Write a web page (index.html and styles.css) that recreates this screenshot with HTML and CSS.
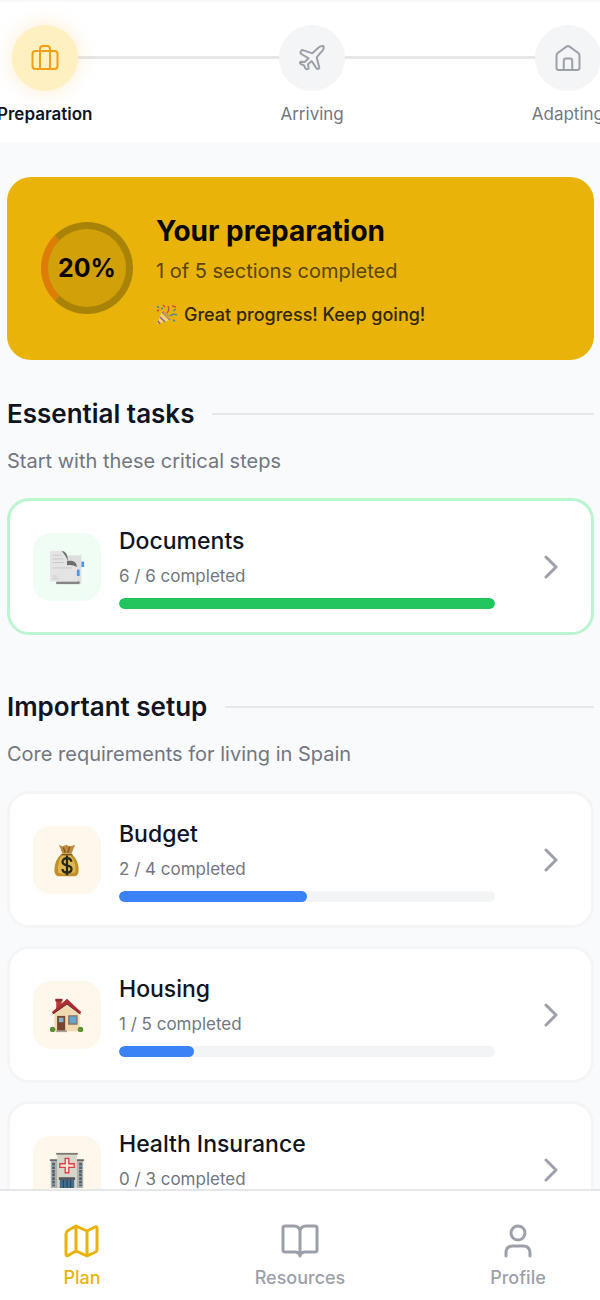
FILE: index.html
```html
<!DOCTYPE html>
<html lang="en">
<head>
  <meta charset="UTF-8">
  <meta name="viewport" content="width=device-width, initial-scale=1">
  <title>Your preparation</title>
  <link rel="stylesheet" href="styles.css">
</head>
<body>
  <div class="app">
    <header class="stages">
      <div class="stage active">
        <span class="stage-icon">
          <svg viewBox="0 0 28 28"><rect x="1.5" y="7" width="25" height="18" rx="3"/><path d="M9 25V5a3 3 0 0 1 3-3h4a3 3 0 0 1 3 3v20"/></svg>
        </span>
        <span class="stage-label">Preparation</span>
      </div>
      <div class="stage-line"></div>
      <div class="stage">
        <span class="stage-icon">
          <svg class="plane" viewBox="0 0 84 84"><path d="M9 21 Q12 17 17 19 L43 28 L61 11 Q68 5 75 6 Q79 8 76 16 Q73 22 66 28 L56 40 L64 71 Q63 77 56 74 L41 51 L30 61 L32 73 Q27 79 22 73 L18 64 L8 60 Q3 56 9 53 L20 54 L32 43 L10 30 Q5 26 9 21 Z"/></svg>
        </span>
        <span class="stage-label">Arriving</span>
      </div>
      <div class="stage-line"></div>
      <div class="stage">
        <span class="stage-icon">
          <svg viewBox="0 0 28 28"><path d="M2.500 11.500Q2.500 10 3.700 9L12.500 2.600Q14 1.500 15.500 2.600L24.300 9Q25.500 10 25.500 11.500V23.500Q25.500 26 23 26H5Q2.500 26 2.500 23.500Z"/><path d="M9.800 26V16.500Q9.800 14.500 11.800 14.500H16.200Q18.200 14.500 18.200 16.500V26"/></svg>
        </span>
        <span class="stage-label">Adapting</span>
      </div>
    </header>

    <main class="content">
      <section class="hero">
        <div class="ring">20%</div>
        <div class="hero-text">
          <h1>Your preparation</h1>
          <p class="hero-count">1 of 5 sections completed</p>
          <p class="hero-cheer">
            <svg class="popper" viewBox="0 0 22 22">
              <path d="M1 20L6 7Q13 9 15 16Z" fill="#f3d468"/>
              <path d="M4 13l5 5M2 17l2 3M6 8l8 8" stroke="#8f62a0" stroke-width="1.500"/>
              <path d="M6 7Q12 7 15 16Q9 14 6 7Z" fill="#c99a4a"/>
              <path d="M11 9Q14 6 12 2" fill="none" stroke="#c4593f" stroke-width="1.500"/>
              <path d="M14 12Q17 9 21 11" fill="none" stroke="#4d86a3" stroke-width="1.500"/>
              <path d="M1 2l2 2M5 5l2-1M17 7l3-2M17 16l2 1" stroke="#4d86a3" stroke-width="1.500"/>
              <path d="M7 1l2 2M16 2l4 1M1 7l2-1" stroke="#d2493d" stroke-width="1.500"/>
            </svg>
            Great progress! Keep going!
          </p>
        </div>
      </section>

      <section class="group">
        <h2>Essential tasks</h2>
        <p class="group-desc">Start with these critical steps</p>
        <a class="card done" href="#documents">
          <span class="tile">
            <svg viewBox="0 0 40 40">
              <path d="M14 7h22v32H14z" fill="#dedede"/>
              <path d="M8 36h26v3H8z" fill="#858585"/>
              <path d="M36 14h3v6h-3z" fill="#4b96e8"/>
              <path d="M1 2h14q6 1 6 11h4q6 0 6 7v16H1z" fill="#e4e4e4"/>
              <path d="M14 2q7 1 7 11-2-5-7-11z" fill="#6d6d6d"/>
              <path d="M20 13h5q6 1 6 7-5-3-11-2z" fill="#6d6d6d"/>
              <path d="M31 23h3v7h-3z" fill="#4b96e8"/>
              <path d="M4 7h10M4 11h12M4 15h13M4 21h22M4 30h5M4 33h7" stroke="#c6c6c6" stroke-width="1"/>
            </svg>
          </span>
          <span class="card-body">
            <strong>Documents</strong>
            <small>6 / 6 completed</small>
            <span class="bar"><span class="bar-fill" style="width: 100%"></span></span>
          </span>
          <svg class="chevron" viewBox="0 0 14 24"><path d="M2 2l10 10L2 22"/></svg>
        </a>
      </section>

      <section class="group">
        <h2>Important setup</h2>
        <p class="group-desc">Core requirements for living in Spain</p>
        <a class="card" href="#budget">
          <span class="tile">
            <svg viewBox="0 0 40 40">
              <path d="M14 13Q6 20 6 31q0 6 4 7h19q4-1 4-7 0-11-8-18z" fill="#c0902b"/>
              <path d="M15 15Q9 21 10 34q5 3 19 0 2-10-5-19z" fill="#dfb94b"/>
              <path d="M11 3l4 2 4-2 4 2 6-2-4 10H15z" fill="#bd8d3d"/>
              <path d="M16 6l2 6M23 5l-2 7M14 14h12" stroke="#805622" stroke-width="1.500"/>
              <path d="M25 22q-1-4-5-4t-5 4q0 3 5 4t5 4q0 4-5 4t-5-4M20 15v22" fill="none" stroke="#27261d" stroke-width="2.500"/>
            </svg>
          </span>
          <span class="card-body">
            <strong>Budget</strong>
            <small>2 / 4 completed</small>
            <span class="bar"><span class="bar-fill" style="width: 50%"></span></span>
          </span>
          <svg class="chevron" viewBox="0 0 14 24"><path d="M2 2l10 10L2 22"/></svg>
        </a>
        <a class="card" href="#housing">
          <span class="tile">
            <svg viewBox="0 0 40 40">
              <path d="M8 3h6v13H8z" fill="#b83a3a"/>
              <path d="M7 2h8v3H7z" fill="#863030"/>
              <path d="M6 18L20 6l14 12v20H6z" fill="#f0dab1"/>
              <path d="M3 17L20 2l16 15-2 2L20 8 5 19z" fill="#a92f35"/>
              <path d="M4 19L20 8l15 11" fill="none" stroke="#702a2a" stroke-width="1"/>
              <path d="M9 21h9v17H9z" fill="#78462e"/>
              <path d="M11 23h5v5h-5z" fill="#83b4d6"/>
              <path d="M22 21h9v9h-9z" fill="#65a5d3" stroke="#847364" stroke-width="1.500"/>
              <path d="M8 37h12v2H8z" fill="#a8a094"/>
              <circle cx="4" cy="36" r="3" fill="#5d9034"/>
              <circle cx="35" cy="36" r="3" fill="#5d9034"/>
            </svg>
          </span>
          <span class="card-body">
            <strong>Housing</strong>
            <small>1 / 5 completed</small>
            <span class="bar"><span class="bar-fill" style="width: 20%"></span></span>
          </span>
          <svg class="chevron" viewBox="0 0 14 24"><path d="M2 2l10 10L2 22"/></svg>
        </a>
        <a class="card" href="#health-insurance">
          <span class="tile">
            <svg viewBox="0 0 40 40">
              <path d="M2 10h36v30H2z" fill="#aeb0ae"/>
              <path d="M1 8h8v2H1zM31 8h8v2h-8z" fill="#666966"/>
              <path d="M9 2h22v38H9z" fill="#d8d5cb"/>
              <path d="M8 1h24v2H8z" fill="#777a76"/>
              <path d="M5 12v26M35 12v26" stroke="#496170" stroke-width="3" stroke-dasharray="3 1"/>
              <path d="M18 7h4v6h6v4h-6v6h-4v-6h-6v-4h6z" fill="#f4e9df" stroke="#e23d45" stroke-width="1.500"/>
              <path d="M12 30h16v10H12z" fill="#416d8e"/>
              <path d="M11 28h18v3H11z" fill="#565c5d"/>
              <path d="M16 31v9M20 31v9M24 31v9" stroke="#243f50" stroke-width="1"/>
            </svg>
          </span>
          <span class="card-body">
            <strong>Health Insurance</strong>
            <small>0 / 3 completed</small>
            <span class="bar"><span class="bar-fill" style="width: 0%"></span></span>
          </span>
          <svg class="chevron" viewBox="0 0 14 24"><path d="M2 2l10 10L2 22"/></svg>
        </a>
      </section>
    </main>

    <nav class="tabs">
      <a class="tab current" href="#plan">
        <svg viewBox="0 0 36 36"><path d="M4 7.500L12 3l11 5 8-4q2-1 2 1.500V26.500q0 1.500-1.500 2.500L23 33l-11-5-7.500 4.300Q2 33.500 2 31V11q0-2 2-3.500zM12 3v25M23 8v25"/></svg>
        Plan
      </a>
      <a class="tab" href="#resources">
        <svg viewBox="0 0 38 36"><path d="M19 8Q18 3 13 3H4Q2 3 2 5V27Q2 29 4 29H14Q18 29 19 33Q20 29 24 29H34Q36 29 36 27V5Q36 3 34 3H25Q20 3 19 8ZM19 8V33"/></svg>
        Resources
      </a>
      <a class="tab" href="#profile">
        <svg viewBox="0 0 36 36"><circle cx="18" cy="10" r="7"/><path d="M6 33V30Q6 23 13 23H23Q30 23 30 30V33"/></svg>
        Profile
      </a>
    </nav>
  </div>
</body>
</html>
```

FILE: styles.css
```css
* {
  box-sizing: border-box;
}
body {
  margin: 0;
  font-family: Inter, "Liberation Sans", sans-serif;
  color: #0f1423;
  background-color: #f9fafb;
}
h1, h2, p {
  margin: 0;
}
a {
  color: inherit;
  text-decoration: none;
}
svg {
  display: block;
}
.app {
  display: flex;
  flex-direction: column;
  height: 100vh;
  overflow: hidden;
}

/* stage stepper, runs a little past both edges */
.stages {
  display: flex;
  flex: none;
  margin: 0 -4px 0 -3px;
  padding: 23px 0 17px;
  border-top: 2px solid #f8f9fb;
  background-color: #fff;
}
.stage {
  display: flex;
  flex-direction: column;
  align-items: center;
  gap: 12px;
}
.stage-icon {
  position: relative;
  z-index: 1;
  display: flex;
  align-items: center;
  justify-content: center;
  width: 66px;
  height: 66px;
  border-radius: 50%;
  background-color: #f3f5f7;
  color: #9ca0a8;
}
.stage-icon svg {
  width: 28px;
  height: 28px;
  fill: none;
  stroke: currentColor;
  stroke-width: 2;
  stroke-linejoin: round;
}
.stage-icon .plane {
  stroke-width: 6;
}
.stage-label {
  font-size: 17px;
  line-height: 22px;
  color: #737780;
}
.stage.active .stage-icon {
  background-color: #fef0c0;
  color: #f2a012;
  box-shadow: 0 0 20px rgba(250, 190, 90, 0.3);
}
.stage.active .stage-label {
  font-weight: 600;
  color: #0f1423;
}
.stage-line {
  flex: 1;
  height: 3px;
  margin: 31px -16px 0;
  background-color: #e5e6e8;
}

.content {
  flex: 1;
  min-height: 0;
  padding: 35px 6px 24px 7px;
  overflow-y: auto;
  scrollbar-width: none;
}

/* overall progress */
.hero {
  display: flex;
  align-items: center;
  gap: 23px;
  padding: 36px 34px 33px;
  border-radius: 24px;
  background-color: #e9b30a;
  color: #0a0800;
}
.ring {
  display: flex;
  flex: none;
  align-items: center;
  justify-content: center;
  width: 92px;
  height: 92px;
  margin-bottom: 4px;
  border: 7px solid #a98208;
  border-left-color: #dd7c08;
  border-radius: 50%;
  background-color: #d2a10a;
  font-size: 25px;
  font-weight: 700;
}
.hero h1 {
  font-size: 28px;
  font-weight: 700;
  line-height: 36px;
}
.hero-count {
  margin-top: 8px;
  font-size: 20px;
  line-height: 28px;
  color: #57450b;
}
.hero-cheer {
  display: flex;
  align-items: center;
  gap: 6px;
  margin-top: 18px;
  font-size: 18px;
  font-weight: 500;
  line-height: 24px;
  color: #30270a;
}
.popper {
  width: 22px;
  height: 22px;
}

/* task groups */
.group {
  margin-top: 36px;
}
.group + .group {
  margin-top: 54px;
}
.group h2 {
  display: flex;
  align-items: center;
  gap: 18px;
  font-size: 26px;
  font-weight: 600;
  line-height: 36px;
}
.group h2::after {
  content: "";
  flex: 1;
  height: 2px;
  background-color: #e5e7ea;
}
.group-desc {
  margin: 15px 0 23px;
  font-size: 20px;
  line-height: 28px;
  color: #717680;
}
.card {
  display: flex;
  align-items: center;
  gap: 18px;
  padding: 24px 33px 23px 23px;
  border: 3px solid #f4f5f7;
  border-radius: 22px;
  background-color: #fff;
}
.card + .card {
  margin-top: 18px;
}
.card.done {
  border-color: #bbf5d0;
}
.tile {
  display: flex;
  flex: none;
  align-items: center;
  justify-content: center;
  width: 68px;
  height: 68px;
  border-radius: 18px;
  background-color: #fef7ec;
}
.done .tile {
  background-color: #f0fdf5;
}
.tile svg {
  width: 36px;
  height: 36px;
}
.card-body {
  display: flex;
  flex: 1;
  flex-direction: column;
}
.card-body strong {
  font-size: 23px;
  font-weight: 500;
  line-height: 32px;
}
.card-body small {
  margin-top: 6px;
  font-size: 17px;
  line-height: 26px;
  color: #717680;
}
.bar {
  height: 11px;
  margin-top: 9px;
  border-radius: 6px;
  background-color: #f3f4f5;
  overflow: hidden;
}
.bar-fill {
  display: block;
  height: 100%;
  border-radius: 6px;
  background-color: #3b82f6;
}
.done .bar-fill {
  background-color: #22c55e;
}
.chevron {
  width: 14px;
  height: 24px;
  margin-left: 31px;
  fill: none;
  stroke: #9ca0aa;
  stroke-width: 3;
  stroke-linecap: round;
  stroke-linejoin: round;
}

/* bottom tabs */
.tabs {
  display: flex;
  flex: none;
  justify-content: space-between;
  padding: 32px 30px 11px;
  border-top: 2px solid #e5e6e9;
  background-color: #fff;
}
.tab {
  display: flex;
  flex-direction: column;
  align-items: center;
  gap: 8px;
  width: 104px;
  font-size: 18px;
  font-weight: 500;
  line-height: 22px;
  color: #9ca0aa;
}
.tab svg {
  height: 36px;
  fill: none;
  stroke: currentColor;
  stroke-width: 3;
  stroke-linecap: round;
  stroke-linejoin: round;
}
.tab.current {
  color: #eab30c;
}
```
